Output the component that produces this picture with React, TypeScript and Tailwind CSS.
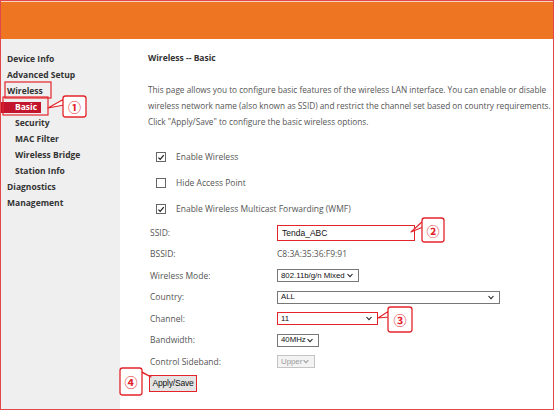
import React from 'react';

const menu = [
  { label: 'Device Info' },
  { label: 'Advanced Setup' },
  { label: 'Wireless' },
  { label: 'Basic', sub: true, active: true },
  { label: 'Security', sub: true },
  { label: 'MAC Filter', sub: true },
  { label: 'Wireless Bridge', sub: true },
  { label: 'Station Info', sub: true },
  { label: 'Diagnostics' },
  { label: 'Management' },
];

function Sidebar() {
  return (
    <aside className="w-[119px] shrink-0 bg-[#efefef] pt-[12px] pl-[6px] font-bold text-[#333]">
      {menu.map((m) =>
        m.active ? (
          <div key={m.label} className="-ml-[6px] flex h-4 items-center">
            <span className="flex h-[11px] w-[40px] items-center bg-[#c3142d] pl-[14px] leading-none text-white">
              {m.label}
            </span>
          </div>
        ) : (
          <div key={m.label} className={m.sub ? 'h-4 pl-[8px]' : 'h-4'}>
            {m.label}
          </div>
        )
      )}
    </aside>
  );
}

function Checkbox({ checked, label }: { checked: boolean; label: string }) {
  return (
    <div className="flex h-[26px] items-center gap-[10px] pl-[8px]">
      <span className="flex h-[10px] w-[10px] items-center justify-center border border-[#666] bg-white">
        {checked && (
          <svg viewBox="0 0 10 10" className="h-[9px] w-[9px]">
            <path d="M1.8 5.2 L4 7.4 L8.4 2" fill="none" stroke="#222" strokeWidth="1.6" />
          </svg>
        )}
      </span>
      <span>{label}</span>
    </div>
  );
}

function Chevron({ color = '#222' }: { color?: string }) {
  return (
    <svg viewBox="0 0 8 6" className="h-[5px] w-[8px] shrink-0">
      <path d="M1 1.2 L4 4.4 L7 1.2" fill="none" stroke={color} strokeWidth="1.3" />
    </svg>
  );
}

function Select({ value, className, disabled }: { value: string; className: string; disabled?: boolean }) {
  return (
    <div
      className={`flex h-[13px] items-center justify-between whitespace-nowrap pl-[3px] pr-[4px] font-['Liberation_Sans',Arial,sans-serif] text-[7.8px] leading-none ${className} ${
        disabled ? 'border border-[#c4c4c4] bg-[#f3f3f3] text-[#9a9a9a]' : 'bg-white text-[#111]'
      }`}
    >
      <span>{value}</span>
      <Chevron color={disabled ? '#999' : '#222'} />
    </div>
  );
}

function Row({ label, children }: { label: React.ReactNode; children?: React.ReactNode }) {
  return (
    <div className="grid h-[21.5px] grid-cols-[127px_1fr] items-center">
      <div>{label}</div>
      <div>{children}</div>
    </div>
  );
}

function Main() {
  return (
    <main className="min-w-0 flex-1 overflow-hidden pl-[28px] pt-[11px]">
      <h1 className="h-4 font-bold text-[#333]">Wireless -- Basic</h1>
      <div className="mt-[16px] whitespace-nowrap text-[8.25px]">
        <p className="h-4">
          This page allows you to configure basic features of the wireless LAN interface. You can enable or disable
        </p>
        <p className="h-4">
          wireless network name (also known as SSID) and restrict the channel set based on country requirements.
        </p>
        <p className="h-4">Click "Apply/Save" to configure the basic wireless options.</p>
      </div>
      <div className="mt-[14px]">
        <Checkbox checked label="Enable Wireless" />
        <Checkbox checked={false} label="Hide Access Point" />
        <Checkbox checked label="Enable Wireless Multicast Forwarding (WMF)" />
      </div>
      <div className="pl-[2px]">
        <Row label="SSID:">
          <div className="flex h-[16px] w-[138px] items-center border-[1.5px] border-[#e3242b] bg-white pl-[4px] font-['Liberation_Sans',Arial,sans-serif] text-[8.5px] text-[#111]">
            Tenda_ABC
          </div>
        </Row>
        <Row label="BSSID:">C8:3A:35:36:F9:91</Row>
        <Row label="Wireless Mode:">
          <Select value="802.11b/g/n Mixed" className="w-[82px] border border-[#777]" />
        </Row>
        <Row label="Country:">
          <Select value="ALL" className="w-[223px] border border-[#777]" />
        </Row>
        <Row label="Channel:">
          <Select value="11" className="w-[101px] border-[1.5px] border-[#e3242b]" />
        </Row>
        <Row label="Bandwidth:">
          <Select value="40MHz" className="w-[42px] border border-[#777]" />
        </Row>
        <Row label="Control Sideband:">
          <Select value="Upper" className="w-[38px]" disabled />
        </Row>
        <Row
          label={
            <button className="-ml-[1px] flex h-[17px] w-[48px] items-center justify-center border-[1.5px] border-[#e3242b] bg-[#e4e4e4] font-['Liberation_Sans',Arial,sans-serif] text-[8.5px] tracking-[-0.2px] text-[#111]">
              Apply/Save
            </button>
          }
        />
      </div>
    </main>
  );
}

const callouts = [
  { n: '①', x: 63, y: 96, w: 23, h: 21, tail: '64,99 64,105 48,108' },
  { n: '②', x: 422, y: 218, w: 22, h: 24, tail: '423,221 423,227 411,232' },
  { n: '③', x: 388, y: 307, w: 24, h: 25, tail: '389,311 389,317 378,318' },
  { n: '④', x: 120, y: 368, w: 22, h: 27, tail: '137,369 141,372 151,377' },
];

function Annotations() {
  return (
    <div className="pointer-events-none absolute -left-px -top-px h-[410px] w-[554px]">
      <svg className="absolute inset-0" width="554" height="410">
        <rect x="5" y="82" width="46" height="16" fill="none" stroke="#e3242b" strokeWidth="1.2" />
        <rect x="3" y="97" width="45" height="18" fill="none" stroke="#e3242b" strokeWidth="1.2" />
        {callouts.map((c) => (
          <g key={c.n}>
            <polygon points={c.tail} fill="#fff" stroke="#e3242b" strokeWidth="1.2" strokeLinejoin="round" />
            <rect x={c.x} y={c.y} width={c.w} height={c.h} rx="2.5" fill="#fff" stroke="#e3242b" strokeWidth="1.3" />
          </g>
        ))}
      </svg>
      {callouts.map((c) => (
        <div
          key={c.n}
          className="absolute flex items-center justify-center font-['Noto_Sans_CJK_SC',sans-serif] text-[13px] font-bold leading-none text-[#e3242b]"
          style={{ left: c.x, top: c.y, width: c.w, height: c.h }}
        >
          {c.n}
        </div>
      ))}
    </div>
  );
}

export default function App() {
  return (
    <div className="relative h-[410px] w-[554px] overflow-hidden border border-[#e2474b] bg-white font-['Open_Sans',sans-serif] text-[8.5px] leading-4 text-[#555]">
      <div className="h-[38px] border-t border-[#f6d3c4] bg-[#ee7623]" />
      <div className="flex h-[370px]">
        <Sidebar />
        <Main />
      </div>
      <Annotations />
    </div>
  );
}
